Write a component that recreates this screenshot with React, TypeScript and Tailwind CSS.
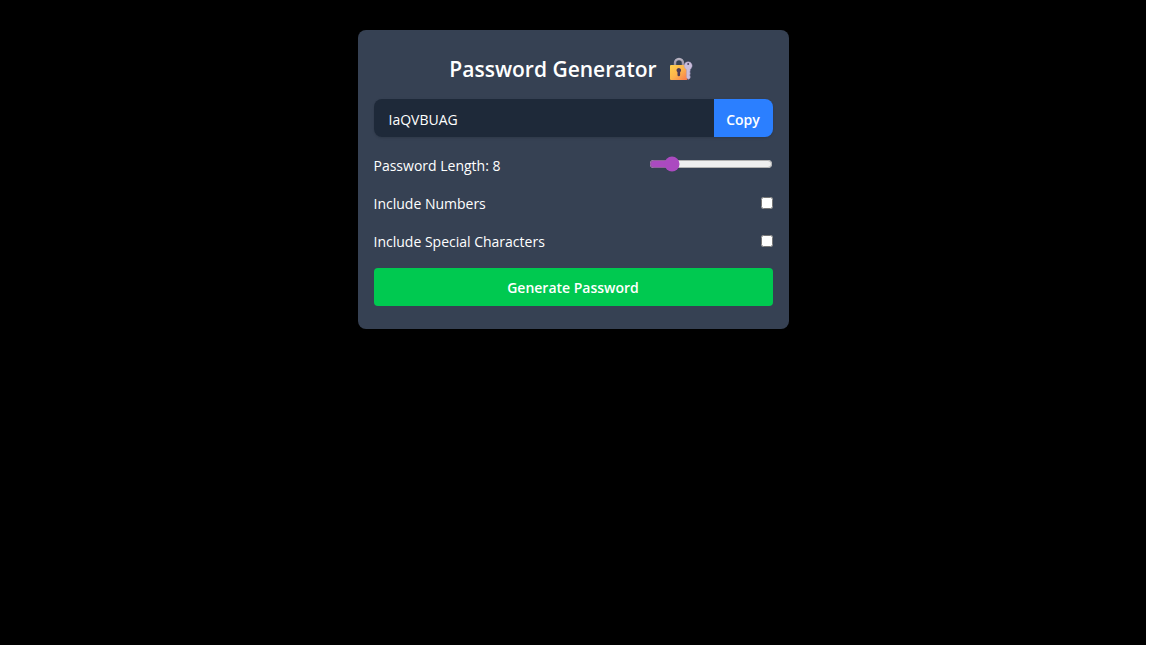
import { useState } from "react";

const LETTERS = "ABCDEFGHIJKLMNOPQRSTUVWXYZabcdefghijklmnopqrstuvwxyz";
const DIGITS = "0123456789";
const SPECIALS = "!@#$%^&*()-_=+[]{}~`";

function LockWithKey() {
  return (
    <svg viewBox="0 0 28 24" className="h-6 w-7 shrink-0" aria-hidden="true">
      <defs>
        <linearGradient id="lockBody" x1="0" y1="0" x2="1" y2="1">
          <stop offset="0" stopColor="#ffd04a" />
          <stop offset="0.5" stopColor="#fcb44c" />
          <stop offset="1" stopColor="#f8774f" />
        </linearGradient>
        <linearGradient id="shackle" x1="0" y1="0" x2="0" y2="1">
          <stop offset="0" stopColor="#b9b3c2" />
          <stop offset="1" stopColor="#8f8798" />
        </linearGradient>
      </defs>
      <path d="M6 9V6a4 4 0 0 1 8 0v3" fill="none" stroke="url(#shackle)" strokeWidth="2.4" />
      <rect x="1" y="8" width="17.5" height="15" rx="1" fill="url(#lockBody)" />
      <path d="M9.800 11a2.300 2.300 0 0 0-1.300 4.200V18a1.300 1.300 0 0 0 2.600 0v-2.800A2.300 2.300 0 0 0 9.800 11Z" fill="#4b3a55" />
      <path
        d="M19 4.800a3.900 3.900 0 0 0-3 6.400l1.500 1.500v7.800l1.500 1.700h1l1.200-1.300v-2l-.7-.8.7-.9v-1.500l-.6-.7.6-.8v-1.600l1.100-1.400A3.900 3.900 0 0 0 19 4.800Z"
        fill="#c9bddb"
        stroke="#a394bd"
        strokeWidth="0.4"
      />
      <circle cx="19.200" cy="7" r="1" fill="#4b4664" />
    </svg>
  );
}

export default function App() {
  const [length, setLength] = useState(8);
  const [numbers, setNumbers] = useState(false);
  const [specials, setSpecials] = useState(false);
  const [password, setPassword] = useState("IaQVBUAG");

  const generate = () => {
    const pool = LETTERS + (numbers ? DIGITS : "") + (specials ? SPECIALS : "");
    setPassword(Array.from({ length }, () => pool[Math.floor(Math.random() * pool.length)]).join(""));
  };

  return (
    <div className="bg-white pr-[3px] font-['Open_Sans','Noto_Sans',sans-serif] text-sm text-white">
      <main className="min-h-screen bg-black px-4 pt-[30px]">
        <section className="mx-auto max-w-[431px] rounded-lg bg-[#364153] px-4 pt-6 pb-[23px]">
          <h1 className="mb-[15px] flex items-center justify-center gap-3 text-[21px] leading-[30px] font-semibold">
            Password Generator
            <LockWithKey />
          </h1>
          <div className="mb-4 flex overflow-hidden rounded-lg shadow-sm">
            <input
              type="text"
              aria-label="Generated password"
              readOnly
              value={password}
              className="h-[38px] min-w-0 flex-1 bg-[#1e2939] px-[15px] pt-0.5 outline-none"
            />
            <button
              type="button"
              onClick={() => navigator.clipboard?.writeText(password)}
              className="w-[59px] bg-[#2b7fff] pt-1 font-semibold"
            >
              Copy
            </button>
          </div>
          <div className="mb-[15px] flex h-[23px] justify-between">
            <label htmlFor="length" className="leading-[25px]">
              Password Length: {length}
            </label>
            <input
              id="length"
              type="range"
              min={4}
              max={32}
              value={length}
              onChange={(e) => setLength(Number(e.target.value))}
              className="mt-[3px] h-4 w-[124px] accent-[#ab4ac0]"
            />
          </div>
          <div className="mb-[15px] flex h-[23px] items-center justify-between">
            <label htmlFor="numbers" className="pt-0.5">Include Numbers</label>
            <input
              id="numbers"
              type="checkbox"
              checked={numbers}
              onChange={(e) => setNumbers(e.target.checked)}
              className="size-3"
            />
          </div>
          <div className="mb-4 flex h-[23px] items-center justify-between">
            <label htmlFor="specials" className="pt-0.5">Include Special Characters</label>
            <input
              id="specials"
              type="checkbox"
              checked={specials}
              onChange={(e) => setSpecials(e.target.checked)}
              className="size-3"
            />
          </div>
          <button
            type="button"
            onClick={generate}
            className="h-[38px] w-full rounded-sm bg-[#00c950] pt-0.5 font-semibold"
          >
            Generate Password
          </button>
        </section>
      </main>
    </div>
  );
}
